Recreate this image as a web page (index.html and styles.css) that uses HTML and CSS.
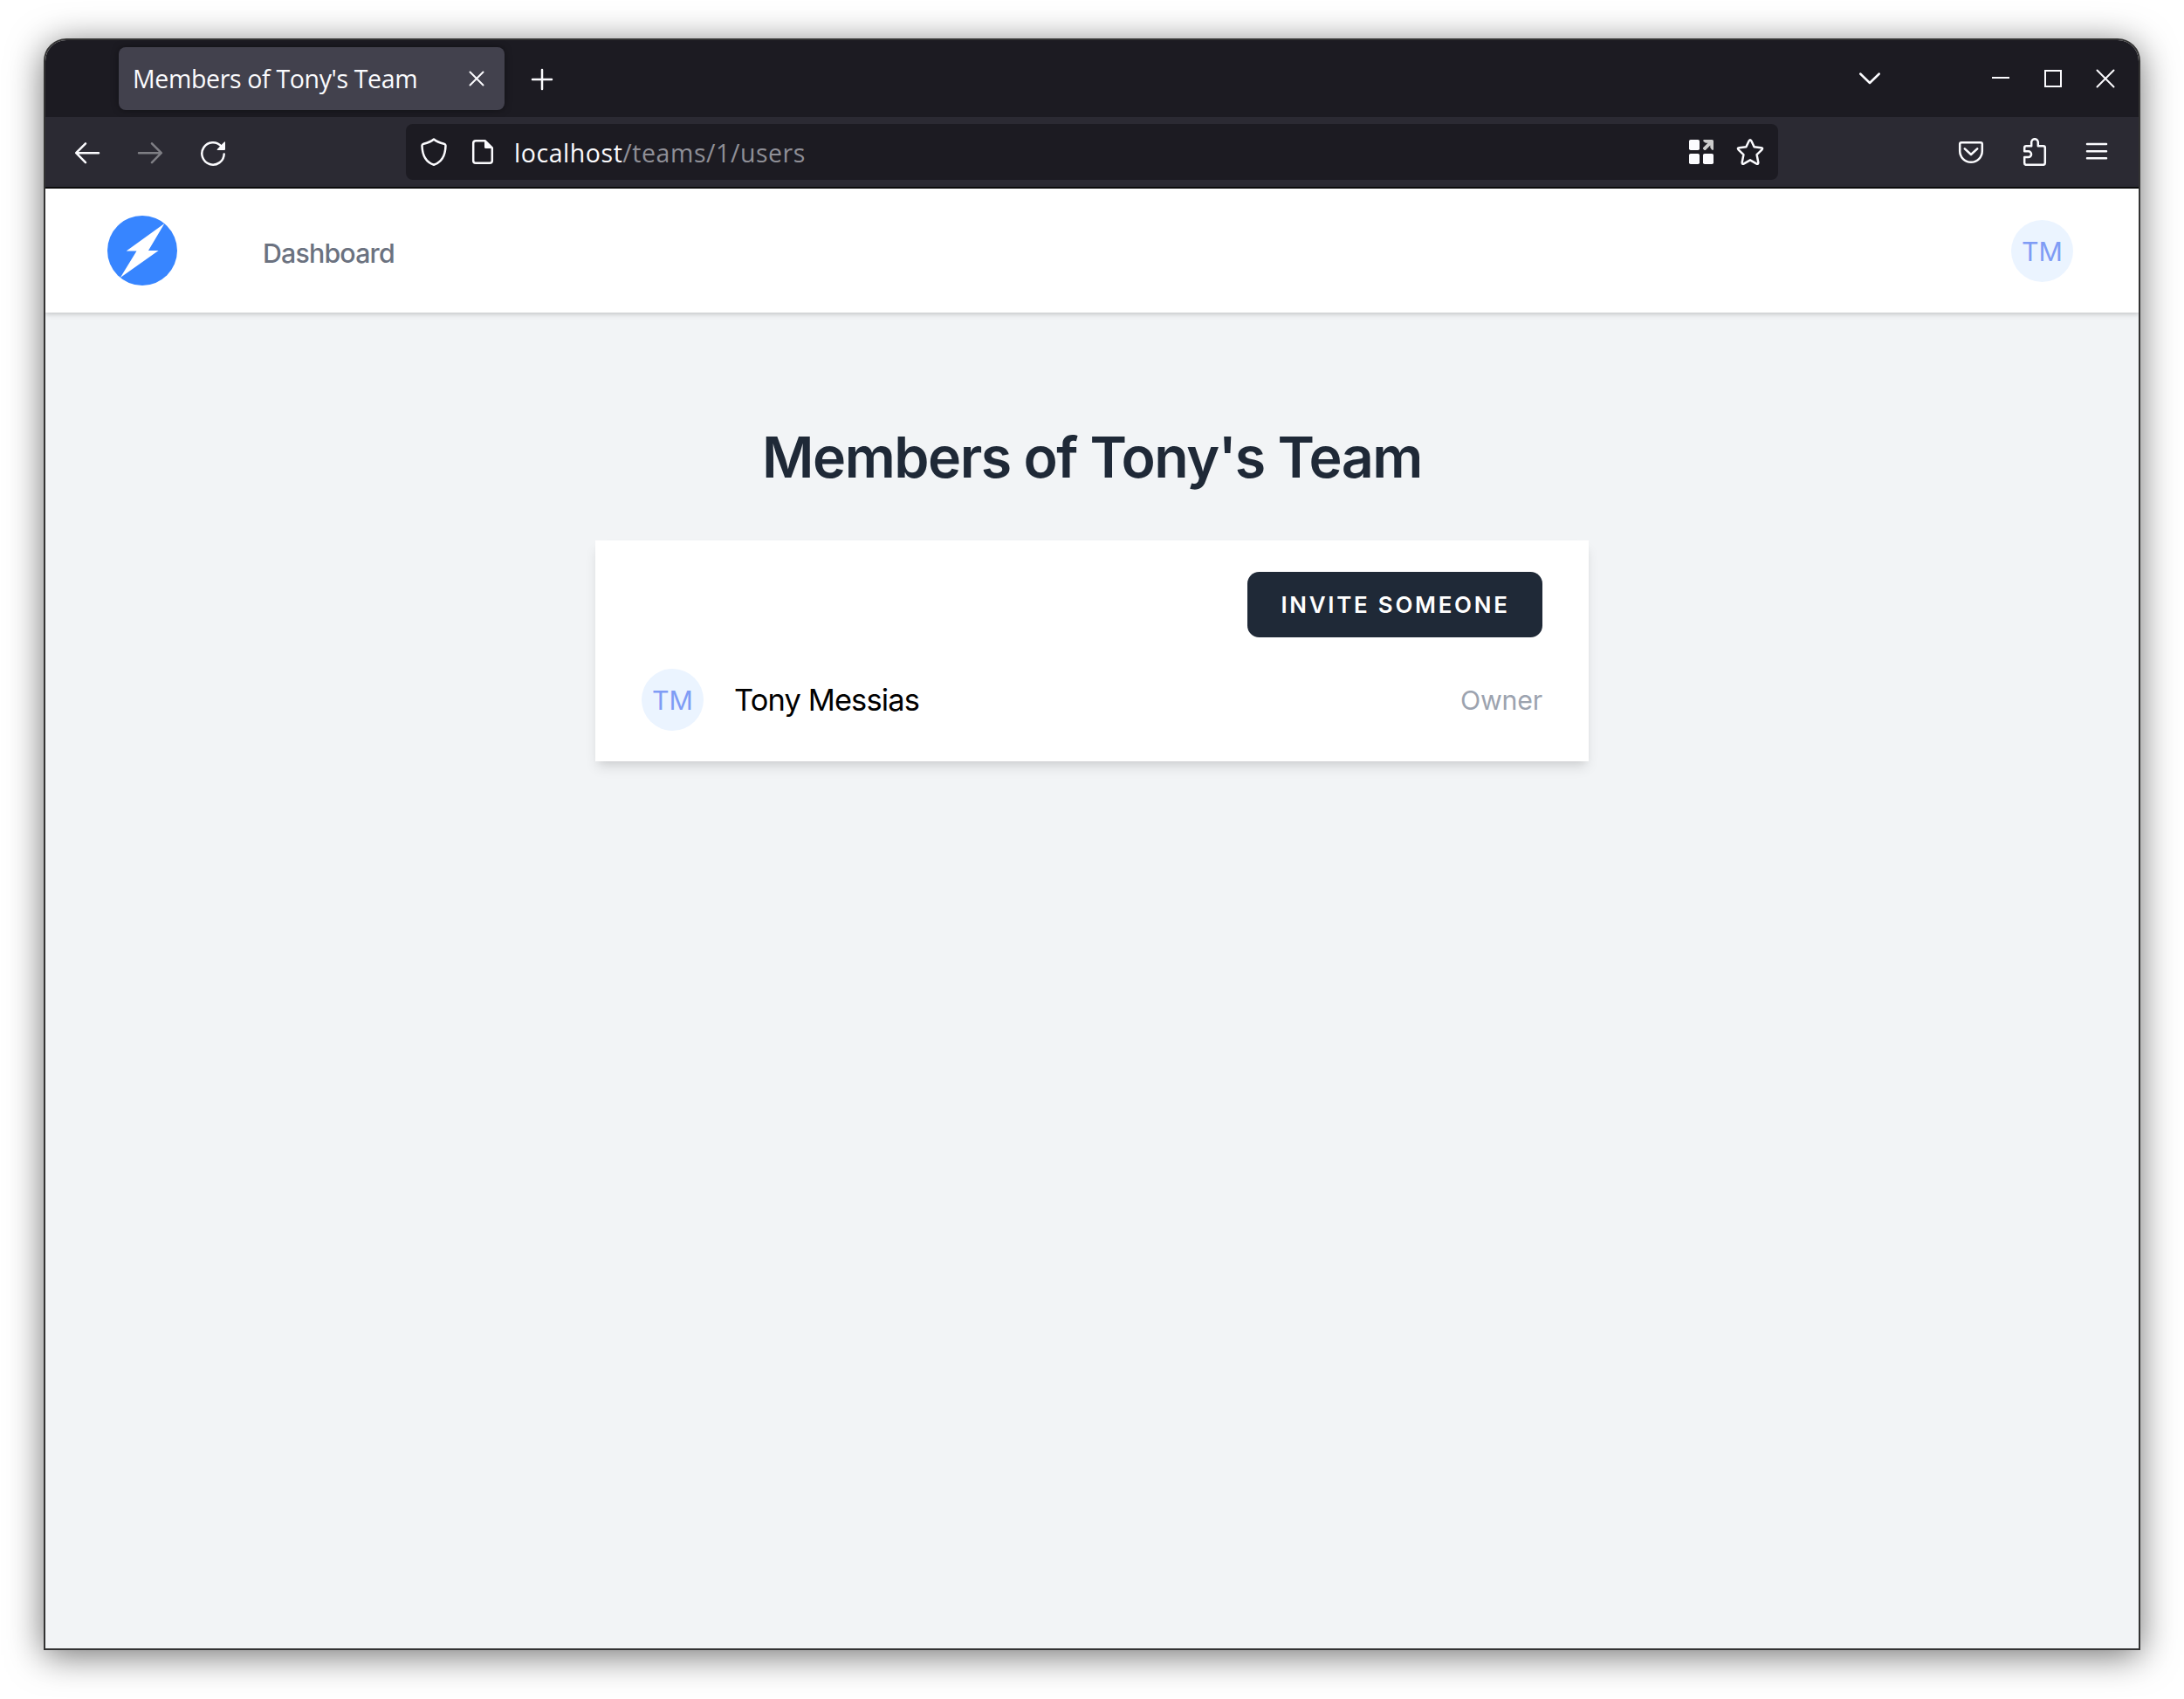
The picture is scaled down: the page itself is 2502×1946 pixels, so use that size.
FILE: index.html
```html
<!DOCTYPE html>
<html lang="en">
<head>
<meta charset="utf-8">
<title>Members of Tony's Team</title>
<link rel="stylesheet" href="styles.css">
</head>
<body>
<div class="window">
  <header class="titlebar">
    <div class="tab">
      <span class="tab-title">Members of Tony's Team</span>
      <svg class="icon thin" viewBox="0 0 32 32"><path d="M8.5 8.5l15 15M23.500 8.500l-15 15"/></svg>
    </div>
    <svg class="icon new-tab" viewBox="0 0 32 32"><path d="M16 6V28M5 17H27"/></svg>
    <div class="window-controls">
      <svg class="icon list-tabs" viewBox="0 0 32 32"><path d="M5.200 10.500L16 21L26.800 10.500"/></svg>
      <svg class="icon sharp" viewBox="0 0 32 32"><path d="M6 15H26"/></svg>
      <svg class="icon sharp" viewBox="0 0 32 32"><path d="M7 7H25V25H7Z"/></svg>
      <svg class="icon thin" viewBox="0 0 32 32"><path d="M6.500 6.500l19 19M25.500 6.500l-19 19"/></svg>
    </div>
  </header>
  <div class="toolbar">
    <div class="nav-buttons">
      <svg class="icon" viewBox="0 0 32 32"><path d="M29 17.200H3.500M14 6.300L3.200 17.200L14 28.200"/></svg>
      <svg class="icon disabled" viewBox="0 0 32 32"><path d="M3 17.200H28.500M18 6.300L28.800 17.200L18 28.200"/></svg>
      <svg class="icon" viewBox="0 0 32 32"><path d="M28.700 18.500A12.700 12.700 0 1 1 25.500 9.500"/><path class="solid" d="M30 5V13Q30 14 29 14H21.500Q19.800 14 21 12.800L28.300 5.200Q30 3.500 30 5Z"/></svg>
    </div>
    <div class="urlbar">
      <svg class="icon" viewBox="0 0 32 32"><path d="M16 1.500C19 4 23.500 5.700 27.700 6.700Q29.600 7.200 29.500 9C29.200 19 26 27.500 16 30.800C6 27.500 2.800 19 2.500 9Q2.400 7.200 4.300 6.700C8.500 5.700 13 4 16 1.500Z"/></svg>
      <svg class="icon" viewBox="0 0 32 32"><path d="M8 3.200H18.500L26.800 11.500V26Q26.800 28.800 24 28.800H8Q5.200 28.800 5.200 26V6Q5.200 3.200 8 3.200Z"/><path class="solid" d="M18 2.500L27.500 12H19.500Q18 12 18 10.500Z"/></svg>
      <div class="url"><span class="host">localhost</span><span class="path">/teams/1/users</span></div>
      <svg class="icon" viewBox="0 0 32 32"><g class="solid"><rect x="2" y="2" width="12" height="12" rx="1.800"/><rect x="2" y="18" width="12" height="12" rx="1.800"/><rect x="18" y="18" width="12" height="12" rx="1.800"/><path class="muted" d="M19 2H28.500Q30 2 30 3.500V13Q29.500 14.500 28 13.500L26.300 11V8.500L20.800 14H19.500L18 12.500V11.200L23.500 5.700H21L18.500 4Q17.500 2.500 19 2Z"/></g></svg>
      <svg class="icon" viewBox="0 0 32 32"><path d="M14.700 3.300Q16 1.200 17.300 3.300L20.600 10.300L28.500 11.200Q31.200 11.600 29.300 13.600L23.600 19.200L25.300 27.900Q25.500 30.700 23 29.400L16 25.300L9 29.400Q6.500 30.700 6.700 27.900L8.400 19.200L2.700 13.600Q0.800 11.600 3.500 11.200L11.400 10.300Z"/></svg>
    </div>
    <div class="menu-buttons">
      <svg class="icon" viewBox="0 0 32 32"><path d="M5 5.200H27Q28.800 5.200 28.800 7V15A12.800 12.800 0 0 1 3.200 15V7Q3.200 5.200 5 5.200ZM8.800 12.300L16 19L23.200 12.300"/></svg>
      <svg class="icon" viewBox="0 0 32 32"><path d="M5.200 15.300V11.200Q5.200 9.200 7.200 9.200H13.200V5A3.800 3.800 0 0 1 20.800 5V9.200H26.800Q28.800 9.200 28.800 11.200V28.800Q28.800 30.800 26.800 30.800H7.200Q5.200 30.800 5.200 28.800V22H9.700A3.350 3.350 0 0 0 9.700 15.300Z"/></svg>
      <svg class="icon" viewBox="0 0 32 32"><path d="M5 7.100H27M5 15.200H27M5 23.200H27"/></svg>
    </div>
  </div>
  <div class="page">
    <nav class="app-nav">
      <svg class="logo" viewBox="0 0 80 80"><circle cx="40" cy="40" r="40"/><path d="M65.400 9L47 40H58.600L14.800 71L33.500 40.500H21.700Z"/></svg>
      <a class="nav-link">Dashboard</a>
      <span class="avatar">TM</span>
    </nav>
    <main class="content">
      <h1 class="heading">Members of Tony's Team</h1>
      <section class="card">
        <button class="invite">INVITE SOMEONE</button>
        <div class="member">
          <span class="avatar">TM</span>
          <span class="name">Tony Messias</span>
          <span class="role">Owner</span>
        </div>
      </section>
    </main>
  </div>
</div>
</body>
</html>
```
FILE: styles.css
```css
* { box-sizing: border-box; }

body {
  margin: 0;
  height: 1946px;
  padding: 44px 50px 56px;
  background: #fff;
  font-family: Inter, "Liberation Sans", sans-serif;
  overflow: hidden;
}

.window {
  display: flex;
  flex-direction: column;
  height: 1846px;
  border: 2px solid #333;
  border-radius: 26px 26px 0 0;
  overflow: hidden;
  box-shadow: 0 6px 40px rgba(0, 0, 0, .56);
}

.titlebar,
.toolbar {
  display: flex;
  align-items: center;
  flex: none;
  color: #fbfbfe;
  font-family: "Open Sans", "Noto Sans", sans-serif;
  font-size: 28.500px;
}

.titlebar {
  height: 88px;
  padding: 0 24px 0 84px;
  background: #1c1b22;
}

.icon {
  flex: none;
  width: 32px;
  height: 32px;
  fill: none;
  stroke: #fbfbfe;
  stroke-width: 2.500;
  stroke-linecap: round;
  stroke-linejoin: round;
}

.thin { stroke-width: 2; }
.sharp { stroke-width: 2; stroke-linecap: butt; stroke-linejoin: miter; }
.disabled { opacity: .4; }
.solid { fill: #fbfbfe; stroke: none; }
.muted { fill: #ccc; }

.tab {
  display: flex;
  align-items: center;
  justify-content: space-between;
  width: 442px;
  height: 72px;
  padding: 0 16px;
  border-radius: 8px;
  background: #42414d;
  box-shadow: 0 0 8px rgba(0, 0, 0, .4);
}

.tab-title { letter-spacing: -.350px; white-space: nowrap; }
.new-tab { margin-left: 27px; }

.window-controls {
  display: flex;
  gap: 28px;
  margin-left: auto;
  margin-right: -2px;
}

.list-tabs { margin-right: 90px; }

.toolbar {
  height: 82px;
  padding: 0 32px;
  border-bottom: 2px solid #0c0c0d;
  background: #2b2a33;
}

.nav-buttons,
.menu-buttons {
  display: flex;
  gap: 40px;
}

.menu-buttons { margin-left: auto; }

.urlbar {
  display: flex;
  align-items: center;
  gap: 24px;
  width: 1572px;
  height: 64px;
  margin-left: 205px;
  padding: 0 16px;
  border-radius: 8px;
  background: #1c1b22;
}

.url {
  flex: 1;
  margin-left: -4px;
  padding-top: 1px;
  letter-spacing: .550px;
}

.path { color: #8f8f97; }

.page {
  flex: 1;
  background: #f2f4f6;
}

.app-nav {
  display: flex;
  align-items: center;
  height: 142px;
  padding: 0 75px 0 71px;
  background: #fff;
  box-shadow: 0 2px 7px rgba(0, 0, 0, .12), 0 2px 4px rgba(0, 0, 0, .08);
}

.logo { width: 80px; height: 80px; }
.logo circle { fill: #3785ff; }
.logo path { fill: #fff; }

.nav-link {
  margin-left: 98px;
  padding-top: 6px;
  color: #6b7280;
  font-size: 30.300px;
  font-weight: 500;
  letter-spacing: -.800px;
}

.avatar {
  display: flex;
  align-items: center;
  justify-content: center;
  width: 71px;
  height: 71px;
  border-radius: 50%;
  background: #ebf4ff;
  color: #7f9cf5;
  font-size: 30.300px;
}

.app-nav .avatar { margin: 1px 0 0 auto; }

.content {
  display: flex;
  flex-direction: column;
  align-items: center;
  padding-top: 126px;
}

.heading {
  margin: 0;
  color: #1f2937;
  font-size: 64.500px;
  font-weight: 600;
  line-height: 80px;
  letter-spacing: -1.500px;
}

.card {
  display: flex;
  flex-direction: column;
  gap: 36px;
  width: 1138px;
  height: 253px;
  margin-top: 55px;
  padding: 36px 53px 0;
  background: #fff;
  box-shadow: 0 9px 13.500px -2.250px rgba(0, 0, 0, .1), 0 4.500px 9px -4.500px rgba(0, 0, 0, .1);
}

.invite {
  align-self: flex-end;
  width: 338px;
  height: 75px;
  padding: 0 0 1px 1px;
  border: 0;
  border-radius: 13.500px;
  background: #1f2937;
  color: #fff;
  font-family: inherit;
  font-size: 25.900px;
  font-weight: 600;
  letter-spacing: 2.750px;
}

.member {
  display: flex;
  align-items: center;
}

.name {
  margin-left: 35px;
  color: #000;
  font-size: 34.400px;
  letter-spacing: -.850px;
}

.role {
  margin-left: auto;
  color: #9ca3af;
  font-size: 30.300px;
  letter-spacing: -.200px;
}
```
